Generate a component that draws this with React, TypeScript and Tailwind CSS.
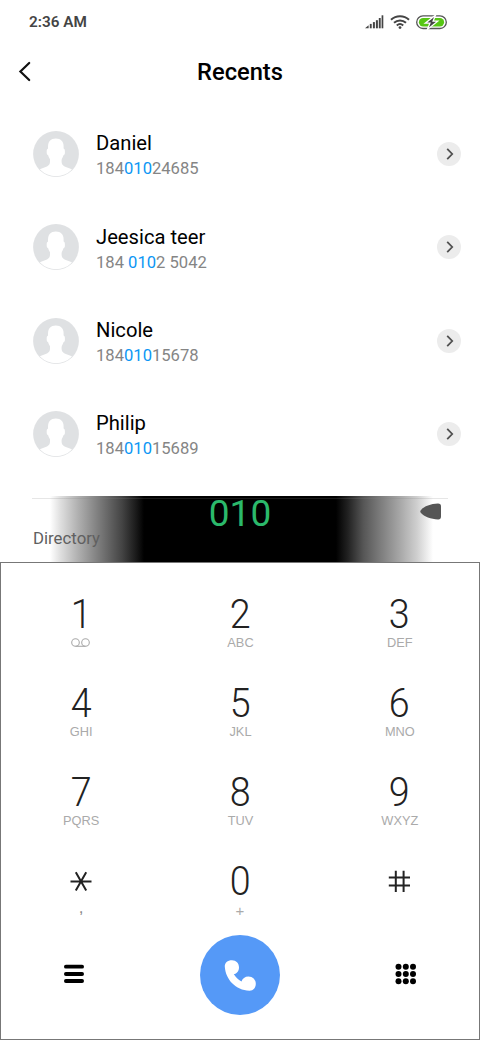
import React from "react";

type Contact = { name: string; parts: [string, string, string] };

const contacts: Contact[] = [
  { name: "Daniel", parts: ["184", "010", "24685"] },
  { name: "Jeesica teer", parts: ["184 ", "010", "2 5042"] },
  { name: "Nicole", parts: ["184", "010", "15678"] },
  { name: "Philip", parts: ["184", "010", "15689"] },
];

const keys: [string, string][] = [
  ["1", "voicemail"],
  ["2", "ABC"],
  ["3", "DEF"],
  ["4", "GHI"],
  ["5", "JKL"],
  ["6", "MNO"],
  ["7", "PQRS"],
  ["8", "TUV"],
  ["9", "WXYZ"],
  ["*", ","],
  ["0", "+"],
  ["#", ""],
];

function StatusBar() {
  return (
    <div className="flex h-11 items-center justify-between pl-[29px] pr-[33px]">
      <span className="text-[15.3px] font-semibold text-[#444]">2:36 AM</span>
      <div className="flex items-center">
        <svg width="19" height="14" viewBox="0 0 19 14" fill="#444">
          <path d="M0 13.3 3.6 10.2V13.3Z" />
          <rect x="4.8" y="8.9" width="1.9" height="4.4" />
          <rect x="7.9" y="7.1" width="2" height="6.2" />
          <rect x="10.9" y="5.2" width="2" height="8.1" />
          <rect x="13.8" y="3" width="1.9" height="10.3" />
          <rect x="16.6" y="0.3" width="1.7" height="13" />
        </svg>
        <svg className="ml-[6px]" width="20" height="14" viewBox="0 0 20 14" fill="none" stroke="#444" strokeWidth="2">
          <path d="M1 4.7C6 0 14 0 19 4.7M4 7.7c3.4-3.1 8.6-3.1 12 0M6.8 10.5c1.9-1.7 4.5-1.7 6.4 0" />
          <circle cx="10" cy="12.6" r="1.4" fill="#444" stroke="none" />
        </svg>
        <svg className="ml-[6px]" width="31" height="15" viewBox="0 0 31 15">
          <rect x="0.7" y="0.9" width="29.6" height="12.6" rx="6.3" fill="#fff" stroke="#555" strokeWidth="1.3" />
          <rect x="2.9" y="3" width="25.2" height="8.4" rx="4.2" fill="#56c613" />
          <path d="M19.6 0 9.3 8.2h4.6L11.4 14.4l10.3-8.2h-4.6Z" fill="#444" stroke="#fff" strokeWidth="1.3" />
        </svg>
      </div>
    </div>
  );
}

function Avatar() {
  return (
    <svg width="46" height="46" viewBox="0 0 46 46" className="shrink-0">
      <defs>
        <clipPath id="avatar-clip">
          <circle cx="23" cy="23" r="22.3" />
        </clipPath>
      </defs>
      <circle cx="23" cy="23" r="22.9" fill="#dfe1e3" />
      <g clipPath="url(#avatar-clip)" fill="#fff">
        <path d="M22.8 7.5c-5.2 0-7.8 3-7.8 8v7c0 4.6 3.8 9 7.8 9s7.8-4.4 7.8-9v-7c0-5-2.6-8-7.8-8Z" />
        <rect x="13.7" y="17.3" width="18.2" height="7" rx="2.6" />
        <path d="M17 24h11.6v6.5c0 3.8 2.4 5 6.3 6.2 3.8 1.2 6.5 3 7.6 6V48H3v-5.3c1.1-3 3.9-4.8 7.7-6 3.9-1.2 6.3-2.4 6.3-6.2Z" />
      </g>
    </svg>
  );
}

function ContactRow({ name, parts }: Contact) {
  return (
    <li className="flex h-[93.33px] items-center pl-[32.5px] pr-[19px]">
      <Avatar />
      <div className="ml-[17.5px] grow pt-[3.6px]">
        <div className="text-[20.2px] leading-[26px] text-black">{name}</div>
        <div className="text-[16.6px] leading-[25px] text-[#858585]">
          {parts[0]}
          <span className="text-[#0c96f4]">{parts[1]}</span>
          {parts[2]}
        </div>
      </div>
      <button className="flex size-[24px] items-center justify-center rounded-full bg-[#ececec]">
        <svg width="24" height="24" viewBox="0 0 24 24" fill="none" stroke="#505050" strokeWidth="1.8">
          <path d="m10.2 6.8 5 5.2-5 5.2" />
        </svg>
      </button>
    </li>
  );
}

function KeyGlyph({ value }: { value: string }) {
  if (value === "*") {
    return (
      <svg width="22" height="42" viewBox="0 0 22 42" stroke="#222" strokeWidth="2">
        <path d="M.5 20.5h21M5.8 11.2l10.4 18.2M16.2 11.2 5.8 29.4" />
      </svg>
    );
  }
  if (value === "#") {
    return (
      <svg width="22" height="42" viewBox="0 0 22 42" stroke="#222" strokeWidth="2">
        <path d="M.8 16.5h21.2M.8 24.4h21.2M7.8 9.8v21.2M15.6 9.8v21.2" />
      </svg>
    );
  }
  return (
    <span className="scale-x-[0.94] text-[40px] font-light leading-[42px] text-[#222]">{value}</span>
  );
}

function KeyLabel({ value }: { value: string }) {
  if (value === "voicemail") {
    return (
      <svg className="-mt-[3px]" width="19" height="10" viewBox="0 0 19 10" fill="none" stroke="#aaa" strokeWidth="1.1">
        <circle cx="4.5" cy="4.5" r="3.8" />
        <circle cx="14.5" cy="4.5" r="3.8" />
        <path d="M4.5 8.3h10" />
      </svg>
    );
  }
  if (value === ",") {
    return <span className="mb-[6px] pl-px text-[17px] text-[#888]">{value}</span>;
  }
  if (value === "+") {
    return <span className="text-[15px]">{value}</span>;
  }
  return <span className="-mt-[2px] pl-px">{value}</span>;
}

function Dialpad() {
  return (
    <section className="flex h-[478px] flex-col border border-[#777] bg-white">
      <div className="grid grid-cols-3 pt-[31px]">
        {keys.map(([digit, label]) => (
          <button key={digit} className="flex h-[89px] flex-col items-center">
            <span className="flex h-[42px] items-center">
              <KeyGlyph value={digit} />
            </span>
            <span className="flex h-4 items-center font-['Liberation_Sans',sans-serif] text-[12.8px] leading-4 text-[#aaa]">
              <KeyLabel value={label} />
            </span>
          </button>
        ))}
      </div>
      <div className="-mt-[15px] grid h-20 grid-cols-3 items-center">
        <svg className="ml-[63px]" width="20" height="22" viewBox="0 0 20 22" stroke="#000" strokeWidth="3.8" strokeLinecap="round">
          <path d="M1.9 2.7h16.2M1.9 10h16.2M1.9 17h16.2" />
        </svg>
        <button className="flex size-20 items-center justify-center justify-self-center rounded-full bg-[#5599f7]">
          <svg width="80" height="80" viewBox="0 0 80 80" fill="#fff">
            <path d="M32 25.2c-4.5 0-7.5 2.7-7.2 6.5C25.7 44.5 35.5 55.1 49.5 55.7c3.7.1 6.3-2.9 6.3-7 0-4.1-3.2-7.3-7.3-7.3-3.5 0-6.2 2-7 5.1-3.4-1.8-5.9-4.2-7.7-7.4 3-.6 5.2-3.3 5.2-6.7 0-4.1-2.9-7.2-7-7.2Z" />
          </svg>
        </button>
        <svg className="-mt-[2px] ml-[75px]" width="22" height="22" viewBox="0 0 22 22" fill="#000">
          {[3.7, 11, 18.2].map((y) =>
            [3.5, 10.8, 18].map((x) => <circle key={`${x}-${y}`} cx={x} cy={y} r="3" />),
          )}
        </svg>
      </div>
    </section>
  );
}

export default function App() {
  return (
    <main className="h-[1040px] w-[480px] overflow-hidden bg-white font-['Roboto',sans-serif]">
      <StatusBar />
      <header className="grid h-14 grid-cols-3 items-center">
        <svg className="ml-[18px]" width="14" height="22" viewBox="0 0 14 22" fill="none" stroke="#111" strokeWidth="2.2" strokeLinecap="round">
          <path d="m11.2 2-8.8 8.5 8.8 8.5" />
        </svg>
        <h1 className="text-center text-[23.7px] font-medium leading-8 text-black">Recents</h1>
      </header>
      <ul className="h-[395.5px] pt-[7.3px]">
        {contacts.map((c) => (
          <ContactRow key={c.name} {...c} />
        ))}
      </ul>
      <div className="relative grid h-[66.5px] grid-cols-3 bg-[linear-gradient(90deg,#fff_50px,#e0e0e0_60px,#b0b0b0_78px,#777_101px,#444_122px,#1a1a1a_136px,#000_144px,#000_336px,#222_348px,#555_363px,#777_378px,#a5a5a5_399px,#cfcfcf_417px,#f0f0f0_428px,#fff_433px)]">
        <div className="absolute left-8 top-[2px] h-px w-[416px] bg-[#808080]/20" />
        <span className="pl-[33px] pt-[31px] text-[16.8px] leading-[22px] text-[#606060]">Directory</span>
        <span className="text-center text-[37px] leading-[35px] text-[#2bb96b]">010</span>
        <svg className="ml-[99px] mt-[7px]" width="23" height="18" viewBox="0 0 23 18" fill="#555">
          <path d="M2 6.9C5 3.4 12 .9 19 .6c2 0 3 .9 3 2.8v10.2c0 2-1 3-3 2.9C12 16.2 5 13.6 2 10.1 1 8.900 1 8.100 2 6.900Z" />
        </svg>
      </div>
      <Dialpad />
    </main>
  );
}
